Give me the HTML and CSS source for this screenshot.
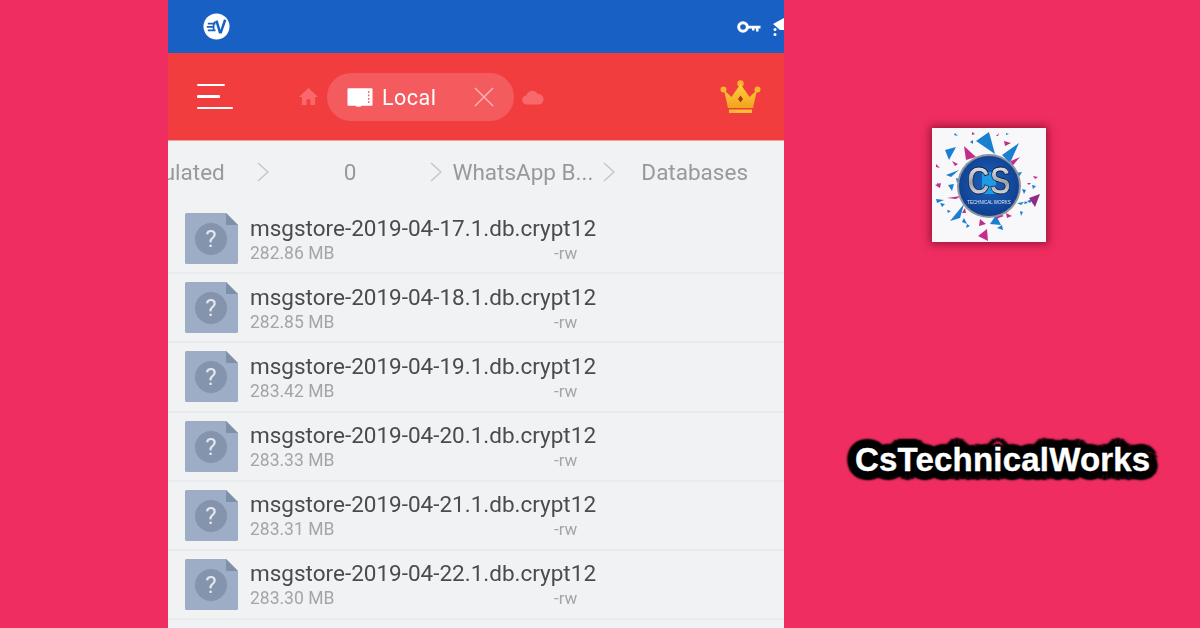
FILE: index.html
```html
<!DOCTYPE html>
<html lang="en">
<head>
<meta charset="utf-8">
<title>CsTechnicalWorks</title>
<link rel="stylesheet" href="styles.css">
</head>
<body>
<div class="page">
  <main class="phone">
    <div class="status">
      <svg class="ev" viewBox="0 0 28 28"><circle cx="14" cy="14" r="13.5" fill="#fff"/><path d="M5 11h8M4 14.5h7M5 18h8M13 9l-2 2v7" fill="none" stroke="#1860c4" stroke-width="1.8"/><path d="M14 8l3.500 12h1L23 7" fill="none" stroke="#1860c4" stroke-width="2.600"/></svg>
      <svg class="key" viewBox="0 0 24 12"><circle cx="6" cy="6" r="4.300" fill="none" stroke="#fff" stroke-width="3"/><path d="M10 4.700h13.500v2.800h-2v3h-2.500v-3h-1.500v2h-2.500v-2H10z" fill="#fff"/></svg>
      <svg class="wifi" viewBox="0 0 12 20"><path d="M1 7L12 1v12H8z" fill="#fff"/><circle cx="3" cy="12.500" r="1.500" fill="#fff"/><circle cx="3" cy="17.500" r="1.500" fill="#fff"/></svg>
    </div>
    <header class="toolbar">
      <div class="menu"><span class="bar-a"></span><span class="bar-b"></span><span class="bar-c"></span></div>
      <svg class="home" viewBox="0 0 22 20"><path d="M11 1L1 10.500h3V19h5v-6h4v6h5v-8.500h3z" fill="#f9696b"/></svg>
      <div class="pill">
        <svg class="sd" viewBox="0 0 27 20"><path d="M1.500 1h24a1 1 0 0 1 1 1v16a1 1 0 0 1-1 1H15l-1 1h-4l-1-1H1.500a1 1 0 0 1-1-1V2a1 1 0 0 1 1-1z" fill="#fff"/><path d="M22.500 4v1.800M22.500 7.500v1.800M22.500 11v1.800M22.500 14.500v1.800" stroke="#f4595c" stroke-width="1.500"/></svg>
        <span class="pill-label">Local</span>
        <svg class="close" viewBox="0 0 20 20"><path d="M1 1l18 18M19 1L1 19" stroke="#fbb8b9" stroke-width="1.300" fill="none"/></svg>
      </div>
      <svg class="cloud" viewBox="0 0 22 16"><path d="M5 15.500a4.500 4.500 0 0 1-.6-9A6 6 0 0 1 15.500 5 5.300 5.300 0 0 1 17 15.500z" fill="#f9696b"/></svg>
      <svg class="crown" viewBox="0 0 41 34">
        <defs><linearGradient id="gold" x1="0" y1="0" x2="0" y2="1"><stop offset="0" stop-color="#fcd13c"/><stop offset="1" stop-color="#f2a31f"/></linearGradient></defs>
        <circle cx="3.500" cy="9.500" r="3" fill="#f7b42c"/><circle cx="20.500" cy="3.500" r="3.200" fill="#f7b42c"/><circle cx="37.500" cy="9.500" r="3" fill="#f7b42c"/>
        <path d="M4 10l7.500 7 9-13 9 13 7.500-7-4 18h-25z" fill="url(#gold)"/>
        <path d="M20.500 15.500l2.500 3.500-2.500 3.500-2.500-3.500z" fill="#b5341f"/>
        <path d="M9 29.500h23V33H9z" fill="#f9bd33"/>
      </svg>
    </header>
    <nav class="crumbs">
      <span class="crumb c-emu">Emulated</span>
      <svg class="chev c-gap1" viewBox="0 0 12 20"><path d="M1 1l10 9-10 9" fill="none" stroke="#c4c6c9" stroke-width="1.500"/></svg>
      <span class="crumb c-zero">0</span>
      <svg class="chev c-gap2" viewBox="0 0 12 20"><path d="M1 1l10 9-10 9" fill="none" stroke="#c4c6c9" stroke-width="1.500"/></svg>
      <span class="crumb c-wa">WhatsApp B...</span>
      <svg class="chev c-gap3" viewBox="0 0 12 20"><path d="M1 1l10 9-10 9" fill="none" stroke="#c4c6c9" stroke-width="1.500"/></svg>
      <span class="crumb c-db">Databases</span>
    </nav>
    <ul class="files">
      <li class="file">
        <svg class="fileicon" viewBox="0 0 53 51"><path d="M1.500 0H41l12 12v37.500a1.500 1.500 0 0 1-1.500 1.500h-50A1.500 1.500 0 0 1 0 49.500v-48A1.500 1.500 0 0 1 1.500 0z" fill="#9dadc6"/><path d="M41 0l12 12H41z" fill="#7e8fa8"/><circle cx="26" cy="26" r="16" fill="#8494ad"/><text class="q" x="26" y="34" text-anchor="middle">?</text></svg>
        <div class="meta"><div class="name">msgstore-2019-04-17.1.db.crypt12</div><div class="sub"><span class="size">282.86 MB</span><span class="perm">-rw</span></div></div>
      </li>
      <li class="file">
        <svg class="fileicon" viewBox="0 0 53 51"><path d="M1.500 0H41l12 12v37.500a1.500 1.500 0 0 1-1.500 1.500h-50A1.500 1.500 0 0 1 0 49.500v-48A1.500 1.500 0 0 1 1.500 0z" fill="#9dadc6"/><path d="M41 0l12 12H41z" fill="#7e8fa8"/><circle cx="26" cy="26" r="16" fill="#8494ad"/><text class="q" x="26" y="34" text-anchor="middle">?</text></svg>
        <div class="meta"><div class="name">msgstore-2019-04-18.1.db.crypt12</div><div class="sub"><span class="size">282.85 MB</span><span class="perm">-rw</span></div></div>
      </li>
      <li class="file">
        <svg class="fileicon" viewBox="0 0 53 51"><path d="M1.500 0H41l12 12v37.500a1.500 1.500 0 0 1-1.500 1.500h-50A1.500 1.500 0 0 1 0 49.500v-48A1.500 1.500 0 0 1 1.500 0z" fill="#9dadc6"/><path d="M41 0l12 12H41z" fill="#7e8fa8"/><circle cx="26" cy="26" r="16" fill="#8494ad"/><text class="q" x="26" y="34" text-anchor="middle">?</text></svg>
        <div class="meta"><div class="name">msgstore-2019-04-19.1.db.crypt12</div><div class="sub"><span class="size">283.42 MB</span><span class="perm">-rw</span></div></div>
      </li>
      <li class="file">
        <svg class="fileicon" viewBox="0 0 53 51"><path d="M1.500 0H41l12 12v37.500a1.500 1.500 0 0 1-1.500 1.500h-50A1.500 1.500 0 0 1 0 49.500v-48A1.500 1.500 0 0 1 1.500 0z" fill="#9dadc6"/><path d="M41 0l12 12H41z" fill="#7e8fa8"/><circle cx="26" cy="26" r="16" fill="#8494ad"/><text class="q" x="26" y="34" text-anchor="middle">?</text></svg>
        <div class="meta"><div class="name">msgstore-2019-04-20.1.db.crypt12</div><div class="sub"><span class="size">283.33 MB</span><span class="perm">-rw</span></div></div>
      </li>
      <li class="file">
        <svg class="fileicon" viewBox="0 0 53 51"><path d="M1.500 0H41l12 12v37.500a1.500 1.500 0 0 1-1.500 1.500h-50A1.500 1.500 0 0 1 0 49.500v-48A1.500 1.500 0 0 1 1.500 0z" fill="#9dadc6"/><path d="M41 0l12 12H41z" fill="#7e8fa8"/><circle cx="26" cy="26" r="16" fill="#8494ad"/><text class="q" x="26" y="34" text-anchor="middle">?</text></svg>
        <div class="meta"><div class="name">msgstore-2019-04-21.1.db.crypt12</div><div class="sub"><span class="size">283.31 MB</span><span class="perm">-rw</span></div></div>
      </li>
      <li class="file">
        <svg class="fileicon" viewBox="0 0 53 51"><path d="M1.500 0H41l12 12v37.500a1.500 1.500 0 0 1-1.500 1.500h-50A1.500 1.500 0 0 1 0 49.500v-48A1.500 1.500 0 0 1 1.500 0z" fill="#9dadc6"/><path d="M41 0l12 12H41z" fill="#7e8fa8"/><circle cx="26" cy="26" r="16" fill="#8494ad"/><text class="q" x="26" y="34" text-anchor="middle">?</text></svg>
        <div class="meta"><div class="name">msgstore-2019-04-22.1.db.crypt12</div><div class="sub"><span class="size">283.30 MB</span><span class="perm">-rw</span></div></div>
      </li>
    </ul>
  </main>
  <aside class="brand">
    <svg class="logo" viewBox="0 0 114 114">
      <defs>
        <radialGradient id="disc" cx="0.5" cy="0.45" r="0.55"><stop offset="0" stop-color="#1e62c0"/><stop offset="1" stop-color="#0f3f8f"/></radialGradient>
        <linearGradient id="chrome" x1="0" y1="0" x2="0" y2="1"><stop offset="0" stop-color="#fff"/><stop offset="0.55" stop-color="#9a9fa8"/><stop offset="1" stop-color="#fff"/></linearGradient>
      </defs>
      <rect width="114" height="114" fill="#f8f8fa"/>
      <g fill="#1b7fd0">
        <path d="M13 22l11-3-7 13z"/><path d="M44 13l13-9 6 22z"/><path d="M70 27l17-12-9 20z"/><path d="M78 46l12-2-5 8z"/>
        <path d="M18 93l14-17-4 14z"/><path d="M58 96l6-9 5 10z"/><path d="M4 71l8 1-7 3z"/><path d="M14 47l13-5-8 7z"/>
        <path d="M16 57l6-1-2 7zM24 50l3 1-2 4zM5 55l3 1-2 3zM8 75l5 1-3 3zM90 61l4 1-2 4zM95 73l6-2-3 4zM100 57l4 1-3 3zM93 73l3 2-4 1zM85 75l7-1-3 3zM35 96l3 2-4 2zM65 100l5-3 1 5zM88 83l3 1-2 4zM15 82l4 1-3 2zM38 14l3-2v4zM23 5l3 3-4-1zM74 5l3 1-3 1zM68 34l4-2-1 4zM32 90l3 6-5-2z"/>
      </g>
      <g fill="#c22d8c">
        <path d="M32 18l12 11-10 3z"/><path d="M79 33l-2 9 11-13z"/><path d="M46 108l9-7 1 12z"/><path d="M108 66l-11 4 6 9z" fill="#8f2a86"/>
        <path d="M3 57l6-2-1 5zM80 52l6-1-1 4zM74 85l6 3-5 2zM15 70l14-2-5 3zM30 85l3-5 1 5zM64 84l8 4-8 3zM40 4l3 2-3 1zM64 8l3-3-1 3zM72 13l7 2-6 3zM101 48l5 1-3 2zM95 55l4 0-2 2zM20 33l6 3-3 2zM4 36l4 4-4-1zM48 91l6 5-7 2z"/>
      </g>
      <circle cx="57" cy="58" r="32" fill="#8f949c"/>
      <circle cx="57" cy="58" r="30" fill="url(#disc)"/>
      <path d="M50 44h14v22H50z" fill="#1d9be8"/>
      <text class="logo-cs" x="57" y="66" textLength="44" lengthAdjust="spacingAndGlyphs">CS</text>
      <text class="logo-tw" x="57" y="76">TECHNICAL WORKS</text>
    </svg>
    <div class="brand-name">CsTechnicalWorks</div>
  </aside>
</div>
</body>
</html>
```

FILE: styles.css
```css
html, body { margin: 0; padding: 0; }
body { background: #ef2d60; font-family: Roboto, "Liberation Sans", sans-serif; }
.page { width: 1200px; height: 628px; overflow: hidden; display: flex; }

.phone { width: 616px; margin-left: 168px; height: 628px; background: #f1f2f4; overflow: hidden; display: flex; flex-direction: column; flex: none; filter: blur(0.35px); }

.status { height: 53px; background: #1860c4; display: flex; align-items: center; flex: none; overflow: hidden; padding-left: 35px; }
.ev { width: 27px; height: 27px; flex: none; }
.key { width: 24px; height: 12px; margin-left: 507px; flex: none; }
.wifi { width: 12px; height: 20px; margin-left: 11px; flex: none; }

.toolbar { height: 87px; background: #f23d3e; display: flex; align-items: center; flex: none; padding-left: 29px; }
.menu { width: 36px; display: flex; flex-direction: column; gap: 9px; }
.menu span { display: block; height: 2.500px; background: #fff; border-radius: 1px; }
.bar-a { width: 28px; }
.bar-b { width: 23px; }
.bar-c { width: 36px; }
.home { width: 21px; height: 19px; margin-left: 65px; flex: none; }
.pill { width: 187px; height: 48px; border-radius: 24px; background: #f45b5e; margin-left: 8px; display: flex; align-items: center; padding-left: 20px; box-sizing: border-box; flex: none; }
.sd { width: 26px; height: 20px; flex: none; }
.pill-label { color: #fff; font-size: 21.500px; letter-spacing: 0.5px; margin-left: 9px; width: 92px; padding-top: 2px; flex: none; }
.close { width: 20px; height: 20px; flex: none; }
.cloud { width: 22px; height: 16px; margin-left: 8px; flex: none; }
.crown { width: 41px; height: 34px; margin-left: 176px; flex: none; }

.crumbs { height: 65px; display: flex; align-items: center; justify-content: flex-end; padding-right: 36px; padding-bottom: 2px; overflow: hidden; flex: none; color: #96999e; font-size: 22.500px; box-sizing: border-box; white-space: nowrap; border-top: 1px solid #f4a0a2; }
.crumb { flex: none; }
.chev { width: 12px; height: 20px; flex: none; }
.c-gap1 { margin-left: 32px; }
.c-zero { margin-left: 75px; }
.c-gap2 { margin-left: 74px; }
.c-wa { margin-left: 10px; }
.c-gap3 { margin-left: 10px; }
.c-db { margin-left: 26px; }

.files { list-style: none; margin: 0; padding: 0; }
.file { height: 69.200px; box-sizing: border-box; border-bottom: 2px solid #e9eaec; display: flex; align-items: flex-start; padding: 8px 0 0 17px; }
.fileicon { width: 53px; height: 51px; flex: none; }
.q { fill: #e6e9ef; font: 400 24px Roboto, sans-serif; }
.meta { margin-left: 12px; flex: 1; padding-top: 0.500px; }
.name { font-size: 22.500px; line-height: 28px; color: #4a4b4f; white-space: nowrap; }
.sub { display: flex; font-size: 17.500px; line-height: 22px; color: #a3a5a9; }
.size { width: 304px; }
.perm { color: #a3a5a9; font-size: 17px; }

.brand { flex: 1; display: flex; flex-direction: column; align-items: flex-start; padding-top: 128px; box-sizing: border-box; }
.logo { width: 114px; height: 114px; flex: none; margin-left: 148px; box-shadow: 0 0 8px 2px rgba(120, 10, 40, 0.7); filter: blur(0.4px); }
.logo-cs { font: 700 38px "Liberation Sans", sans-serif; fill: url(#chrome); stroke: #0c1c3c; stroke-width: 0.8px; text-anchor: middle; }
.logo-tw { font: 400 4.500px "Liberation Sans", sans-serif; fill: #dfe6f2; text-anchor: middle; }
.brand-name { margin-top: 198px; margin-left: 71px; font: 700 33px "Liberation Sans", Arial, sans-serif; letter-spacing: 0.2px; -webkit-text-stroke: 0.4px #fff; color: #fff; line-height: 40px; white-space: nowrap; text-shadow: 9px 0 2px #000, -9px 0 2px #000, 0 9px 2px #000, 0 -9px 2px #000, 6px 6px 2px #000, -6px 6px 2px #000, 6px -6px 2px #000, -6px -6px 2px #000, 8px 4px 2px #000, -8px 4px 2px #000, 8px -4px 2px #000, -8px -4px 2px #000, 4px 8px 2px #000, -4px 8px 2px #000, 4px -8px 2px #000, -4px -8px 2px #000, 3px 0 1px #000, -3px 0 1px #000, 0 3px 1px #000, 0 -3px 1px #000; }
```
